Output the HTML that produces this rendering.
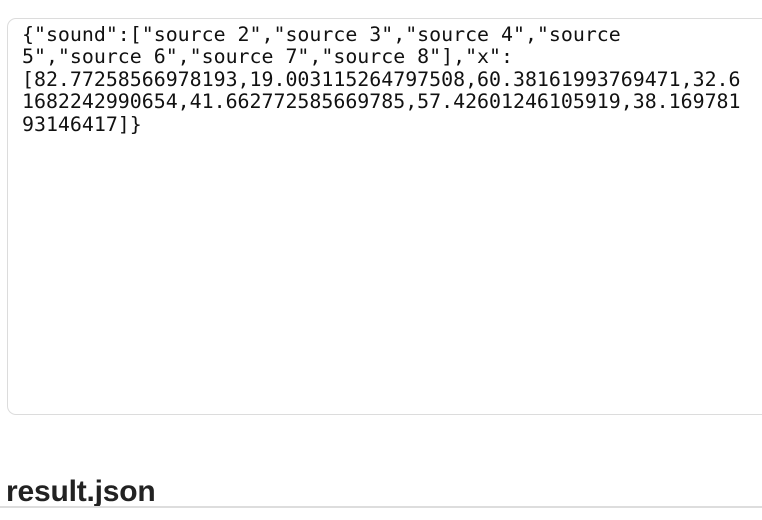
<!DOCTYPE html>
<html><head><style>
html,body{margin:0;padding:0;background:#fff;width:762px;height:520px;overflow:hidden;position:relative}
.box{position:absolute;left:7px;top:18px;width:780px;height:397px;border:1.5px solid #dcdcdc;border-radius:9px;box-sizing:border-box}
pre{position:absolute;left:22px;top:24px;margin:0;font-family:"DejaVu Sans Mono","Liberation Mono",monospace;font-size:19.9px;line-height:22.4px;color:#111}
h1{position:absolute;left:6px;top:475px;margin:0;font-family:"Liberation Sans",sans-serif;font-size:30px;font-weight:bold;color:#222;letter-spacing:-0.2px}
.line{position:absolute;left:0;top:506px;width:762px;height:1.5px;background:#ddd}
</style></head><body>
<div class="box"></div>
<pre>{"sound":["source 2","source 3","source 4","source
5","source 6","source 7","source 8"],"x":
[82.77258566978193,19.003115264797508,60.38161993769471,32.6
1682242990654,41.662772585669785,57.42601246105919,38.169781
93146417]}</pre>
<h1>result.json</h1>
<div class="line"></div>
</body></html>
